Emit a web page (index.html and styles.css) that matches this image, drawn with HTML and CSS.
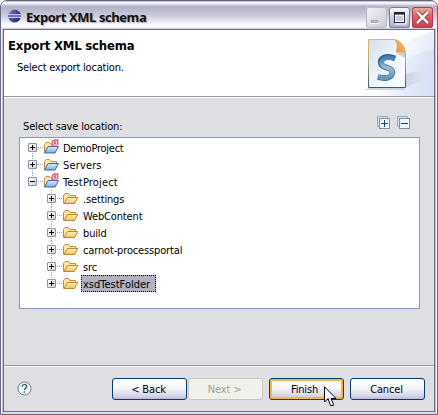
FILE: index.html
```html
<!DOCTYPE html>
<html lang="en">
<head>
<meta charset="utf-8">
<title>Export XML schema</title>
<link rel="stylesheet" href="styles.css">
</head>
<body>
<svg class="defs" width="0" height="0">
  <defs>
    <linearGradient id="gold" x1="0" y1="0" x2="0" y2="1"><stop offset="0" stop-color="#fff3b8"/><stop offset="1" stop-color="#f3c35e"/></linearGradient>
    <linearGradient id="blue" x1="0" y1="0" x2="0" y2="1"><stop offset="0" stop-color="#d9edff"/><stop offset="1" stop-color="#78ace8"/></linearGradient>
    <symbol id="folder" viewBox="0 0 16 16">
      <path d="M.5 12.500V4.500L2 2.500H5.500L7 4.500H12.500V7" fill="#ffe8a6" stroke="#c58a2d"/>
      <path d="M1 12.500L4.500 6.500H14.800L11.500 12.500Z" fill="url(#gold)" stroke="#c0842a"/>
    </symbol>
    <symbol id="project" viewBox="0 0 16 16">
      <path d="M1.500 12.500V4.500L3 2.500H6.500L8 4.500H13.500V7" fill="#ffe8a6" stroke="#c39144"/>
      <path d="M1.500 13L5 6.500H15.500L12 13Z" fill="url(#blue)" stroke="#3f62b5"/>
    </symbol>
    <symbol id="badge" viewBox="0 0 8 9">
      <path d="M6 1.200C3 .2 1 1.800 1 4.300S3.500 8 6 6.800M6.800 0V6M5.200 3C3.200 2.200 2.800 5.500 5.500 5" fill="#f5e4ee" stroke="#cf3f50" stroke-width="1.100"/>
    </symbol>
  </defs>
</svg>
<div class="window">
  <header class="titlebar">
    <svg class="app" width="15" height="15" viewBox="0 0 15 15">
      <defs><linearGradient id="ball" x1="0" x2="1" y1="0" y2=".5"><stop offset="0" stop-color="#d3a0ca"/><stop offset=".35" stop-color="#6559a9"/><stop offset="1" stop-color="#272776"/></linearGradient></defs>
      <circle cx="7.500" cy="7" r="6.500" fill="url(#ball)"/>
      <path d="M1 5.500H14M1 8.500H14" stroke="#c3cdf0"/><path d="M1 7H14" stroke="#6874b9" stroke-width="2"/>
    </svg>
    <span class="caption">Export XML schema</span>
    <div class="controls">
      <svg class="min" width="21" height="21" viewBox="0 0 21 21"><path d="M5 14.500H12" stroke="#9d9db0" stroke-width="3"/><path d="M6 14.500H11" stroke="#c9c9d5"/><path d="M5 16.500H13" stroke="#fff"/></svg>
      <svg class="max" width="21" height="21" viewBox="0 0 21 21"><path d="M6 5.500H17V17H6" fill="none" stroke="#fff"/><rect x="5.500" y="5.500" width="10" height="10" fill="#c8cadc" stroke="#25253c"/><path d="M5 6.500H16" stroke="#25253c" stroke-width="2"/><rect x="6.500" y="8.500" width="8" height="6" fill="none" stroke="#fff"/></svg>
      <svg class="close" width="21" height="21" viewBox="0 0 21 21"><path d="M5 5L16 16M16 5L5 16" stroke="#8d2435" stroke-width="4"/><path d="M5 5L16 16M16 5L5 16" stroke="#fff" stroke-width="2.500"/></svg>
    </div>
  </header>
  <section class="banner">
    <div class="intro">
      <h1>Export XML schema</h1>
      <p>Select export location.</p>
    </div>
    <svg class="art" width="84" height="66" viewBox="0 0 84 66">
      <defs>
        <linearGradient id="sky" x1="0" x2="1" y1=".2" y2=".6"><stop offset=".3" stop-color="#fff"/><stop offset="1" stop-color="#dfe6f8"/></linearGradient>
        <linearGradient id="haze" x1="0" x2="1"><stop offset=".2" stop-color="#d8e1f7" stop-opacity="0"/><stop offset="1" stop-color="#d0dbf4"/></linearGradient>
        <linearGradient id="paper" x1="0" x2="1" y1="0" y2="1"><stop offset="0" stop-color="#d5e0ec"/><stop offset=".6" stop-color="#f3f7fb"/><stop offset="1" stop-color="#fff"/></linearGradient>
        <linearGradient id="edge" x1="0" x2="0" y1="0" y2="1"><stop offset="0" stop-color="#e9b365"/><stop offset=".45" stop-color="#b2a878"/><stop offset="1" stop-color="#315f69"/></linearGradient>
        <linearGradient id="shade" x1="0" x2="1"><stop offset="0" stop-color="#b0aabf"/><stop offset=".6" stop-color="#b8b3c8"/><stop offset="1" stop-color="#cfcce0" stop-opacity="0"/></linearGradient>
        <linearGradient id="letter" x1="0" x2="0" y1="0" y2="1"><stop offset="0" stop-color="#4b7daa"/><stop offset=".5" stop-color="#9bb8d2"/><stop offset="1" stop-color="#6b94b9"/></linearGradient>
        <linearGradient id="fold" x1="0" x2="1" y1="1" y2="0"><stop offset="0" stop-color="#e98e2d"/><stop offset="1" stop-color="#ffc775"/></linearGradient>
      </defs>
      <path d="M42 24Q60 7 84 1V66H20Z" fill="url(#sky)"/>
      <path d="M50 32Q66 22 84 20V66H20Z" fill="url(#haze)" opacity=".6"/>
      <path d="M55 44Q70 40 80 41Q72 52 56 57L54 60H14Z" fill="url(#shade)" opacity=".5"/>
      <path d="M18.500 9.500H45L55.500 22V57.500H18.500Z" fill="url(#paper)" stroke="url(#edge)"/>
      <path d="M45 9.500Q54 12 55.500 22.500L46 22Q49 15 45 9.500Z" fill="url(#fold)" stroke="#d29a55" stroke-width=".6"/>
      <path d="M46 23L55 23V28Z" fill="#b1b8c2" opacity=".6"/>
      <g fill="none" transform="translate(-.5 1.500)">
        <path d="M45.500 27Q39 24.500 35 26Q30.500 28 31.500 32Q32.500 35 38.500 36.500Q44 38 42.500 42.500Q40 48.500 28.500 45.500" stroke="#286195" stroke-width="5.800"/>
        <path d="M45.500 27.500Q39 25 35.500 26.700Q31.500 28.500 32.200 32Q33 35 38.500 36.500Q44 38 42.500 42.500Q40 48 29 45.500" stroke="url(#letter)" stroke-width="4.500"/>
      </g>
    </svg>
  </section>
  <main class="content">
    <div class="toolbar">
      <span class="prompt">Select save location:</span>
      <div class="tools">
        <svg width="13" height="13" viewBox="0 0 13 13"><path d="M.5 10.500V.5H10.500V2M.5 10.500H2" fill="#c9e7f2" stroke="#93acc0"/><rect x="2.500" y="2.500" width="10" height="10" fill="#f4fcff" stroke="#7f8fae"/><path d="M4 7.500H11M7.500 4V11" stroke="#064487"/></svg>
        <svg width="13" height="13" viewBox="0 0 13 13"><path d="M.5 10.500V.5H10.500V2M.5 10.500H2" fill="#c9e7f2" stroke="#93acc0"/><rect x="2.500" y="2.500" width="10" height="10" fill="#f4fcff" stroke="#7f8fae"/><path d="M4 7.500H11" stroke="#064487"/></svg>
      </div>
    </div>
    <ul class="tree">
      <li><div class="row first"><i class="twisty plus"></i><i class="dots"></i><svg class="icon"><use href="#project"/></svg><svg class="decor"><use href="#badge"/></svg><span class="label">DemoProject</span></div></li>
      <li><div class="row"><i class="twisty plus"></i><i class="dots"></i><svg class="icon"><use href="#project"/></svg><span class="label wide">Servers</span></div></li>
      <li><div class="row last"><i class="twisty"></i><i class="dots"></i><svg class="icon"><use href="#project"/></svg><svg class="decor"><use href="#badge"/></svg><span class="label wide">TestProject</span></div>
        <ul>
          <li><div class="row"><i class="twisty plus"></i><i class="dots"></i><svg class="icon"><use href="#folder"/></svg><span class="label">.settings</span></div></li>
          <li><div class="row"><i class="twisty plus"></i><i class="dots"></i><svg class="icon"><use href="#folder"/></svg><span class="label">WebContent</span></div></li>
          <li><div class="row"><i class="twisty plus"></i><i class="dots"></i><svg class="icon"><use href="#folder"/></svg><span class="label">build</span></div></li>
          <li><div class="row"><i class="twisty plus"></i><i class="dots"></i><svg class="icon"><use href="#folder"/></svg><span class="label">carnot-processportal</span></div></li>
          <li><div class="row"><i class="twisty plus"></i><i class="dots"></i><svg class="icon"><use href="#folder"/></svg><span class="label">src</span></div></li>
          <li><div class="row last"><i class="twisty plus"></i><i class="dots"></i><svg class="icon"><use href="#folder"/></svg><span class="label selected">xsdTestFolder</span></div></li>
        </ul>
      </li>
    </ul>
  </main>
  <footer class="footer">
    <svg class="help" width="15" height="15" viewBox="0 0 15 15"><circle cx="7.500" cy="7.500" r="6.500" fill="#f5f9fd" stroke="#66829f"/><path d="M5.200 5.800C5.200 2.900 9.800 3 9.700 5.500C9.600 7.200 7.600 7.200 7.500 9" fill="none" stroke="#426587" stroke-width="1.500"/><path d="M6.700 10.200H8.300V11.700H6.700Z" fill="#426587"/></svg>
    <div class="buttons">
      <div class="pair">
        <button>&lt; Back</button>
        <button disabled>Next &gt;</button>
      </div>
      <button class="default">Finish</button>
      <button>Cancel</button>
    </div>
  </footer>
</div>
<svg class="cursor" width="13" height="21" viewBox="0 0 13 21"><path d="M.5 .8V16L4 12.500L6.500 19.500H9.300V18L7 12.500H12Z" fill="#fff" stroke="#000"/></svg>
</body>
</html>
```

FILE: styles.css
```css
* { box-sizing: border-box; }
body { margin: 0; width: 438px; height: 415px; overflow: hidden; background: #fff; font: 11px/17px "DejaVu Sans Condensed", "DejaVu Sans", sans-serif; color: #000; }
svg { display: block; flex: none; }
.defs { position: absolute; }
.window { height: 415px; border: 1px solid #656580; border-radius: 7px 7px 0 0; padding: 0 2px 2px; background: linear-gradient(90deg, #fff 0 1px, #bebed0 1px 2px, #dfdee3 2px 434px, #bebed0 434px 435px, #fff 435px); display: flex; flex-direction: column; overflow: hidden; }
.titlebar { height: 28px; margin: 0 -2px; padding: 0 4px 0 6px; display: flex; align-items: center; background: linear-gradient(#8888a4 0, #fff 1px, #e8e8f0 3px, #b5b5cc 5px, #b6b6cd 8px, #d0d0df 16px, #f7f7fa 23px, #fff 26px, #c6c6d2 28px); }
.caption { margin-left: 4px; padding-top: 3px; font: bold 13px/18px "Open Sans", sans-serif; letter-spacing: -.43px; text-shadow: 1px 1px 1px #a7a7b9; color: #111; white-space: nowrap; }
.app { margin-top: 3px; }
.controls { display: flex; gap: 2px; margin-left: auto; padding-top: 4px; }
.controls svg { border-radius: 3px; }
.min { background: linear-gradient(135deg, #f3f3f7, #c9c9d7); box-shadow: inset 0 0 0 1px #b8b8c9; }
.max { background: linear-gradient(#fff, #cfd1e1 45%, #a8abca); box-shadow: inset 0 0 0 1px #777da3; }
.close { background: linear-gradient(#f2b299, #df6969 40%, #c83c4c); box-shadow: inset 0 0 0 1px #b33a52; }
.banner { height: 68px; border: solid #6b6b8a; border-width: 1px 1px 0; background: #fff; display: flex; justify-content: space-between; box-shadow: inset 0 -1px #9897a0; }
.intro { padding: 8px 0 0 4px; }
h1 { margin: 0; font: bold 13px/16px "DejaVu Sans Condensed", sans-serif; letter-spacing: -.2px; }
p { margin: 6px 0 0 9px; line-height: 16px; letter-spacing: -.2px; }
.content { height: 268px; padding: 20px 14px 0 15px; border: solid #6b6b8a; border-width: 0 1px; background: linear-gradient(#fff 1px, #dfdee3 1px); }
.toolbar { display: flex; justify-content: space-between; height: 20px; padding: 0 10px 0 4px; }
.prompt { padding-top: 1px; letter-spacing: -.15px; }
.tools { display: flex; gap: 7px; margin-top: -1px; }
.tree { height: 172px; margin: 0; padding: 1px 8px; border: 1px solid #7f9db9; background: #fff; }
ul { list-style: none; margin: 0; padding: 0; }
li ul { margin-left: 19px; }
.row { height: 17px; display: flex; align-items: center; background: repeating-linear-gradient(#aaa 0 1px, transparent 1px 2px) 4px 0 / 1px 100% no-repeat; }
.row.first { background-size: 1px 9px; background-position: 4px 8px; }
.row.last { background-size: 1px 8px; }
.twisty { width: 9px; height: 9px; flex: none; border: 1px solid #8695a5; border-radius: 1px; background: linear-gradient(#000, #000) 1px 3px / 5px 1px no-repeat, linear-gradient(135deg, #fff, #d4d3d2); }
.plus { background: linear-gradient(#000, #000) 1px 3px / 5px 1px no-repeat, linear-gradient(#000, #000) 3px 1px / 1px 5px no-repeat, linear-gradient(135deg, #fff, #d4d3d2); }
.dots { width: 6px; height: 1px; background: repeating-linear-gradient(90deg, transparent 0 1px, #aaa 1px 2px); }
.icon { width: 16px; height: 16px; }
.decor { width: 8px; height: 9px; margin: -8px 0 0 -8px; }
.label { height: 17px; margin-left: 2px; padding: 1px 2px 0; letter-spacing: -.25px; white-space: nowrap; }
.wide { letter-spacing: .15px; }
li li .dots { width: 7px; }
li li .label { letter-spacing: -.15px; }
li li .selected { width: 75px; background: #b2b2c2; border: 1px dotted #000; padding: 0 1px; line-height: 17px; letter-spacing: 0; }
.footer { flex: 1; padding: 0 9px 0 13px; border: solid #6b6b8a; border-width: 0 1px 1px; background: linear-gradient(#9897a0 1px, #fff 1px 2px, #dfdee3 2px); display: flex; align-items: center; }
.buttons { margin-left: auto; display: flex; gap: 6px; padding-top: 2px; }
.pair { display: flex; gap: 1px; }
button { width: 75px; height: 22px; padding: 0 2px 0 0; border: 1px solid #003c74; border-radius: 3px; font: inherit; color: #000; letter-spacing: -.15px; background: linear-gradient(#fff, #f6f6fb 45%, #d5d4e6 85%, #bdbcd2); }
button:disabled { border-color: #c9c7ba; background: #f1f1ec; color: #a1a192; }
.default { padding-right: 4px; box-shadow: inset 0 0 0 2px #f6b73f; }
.cursor { position: absolute; left: 324px; top: 386px; }
```
